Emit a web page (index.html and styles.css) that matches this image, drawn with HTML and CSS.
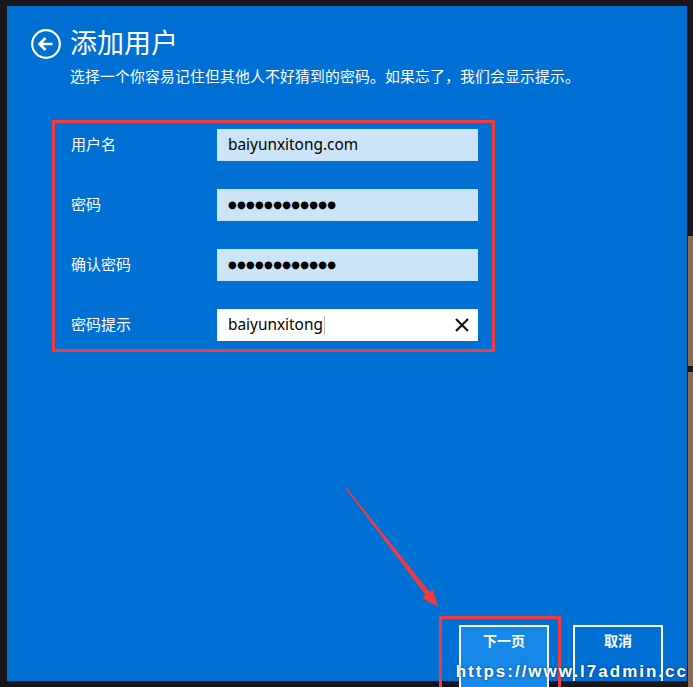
FILE: index.html
```html
<!DOCTYPE html>
<html lang="zh-CN">
<head>
    <meta charset="UTF-8">
    <meta name="viewport" content="width=device-width, initial-scale=1.0">
    <title>添加用户</title>
    <link rel="stylesheet" href="styles.css">
</head>
<body>

<div class="panel">
    <div class="header">
        <svg class="back" width="30" height="30" viewBox="0 0 30 30">
            <circle cx="15" cy="15" r="13.8" fill="none" stroke="#fff" stroke-width="2.2"/>
            <path d="M8.5 15 H21.5 M14.5 9 L8.5 15 L14.5 21" fill="none" stroke="#fff" stroke-width="2.6"/>
        </svg>
        <h1 class="title">添加用户</h1>
    </div>
    <p class="subtitle">选择一个你容易记住但其他人不好猜到的密码。如果忘了，我们会显示提示。</p>

    <div class="form">
        <label class="label">用户名</label>
        <div class="field">baiyunxitong.com</div>

        <label class="label">密码</label>
        <div class="field dots">●●●●●●●●●●●●</div>

        <label class="label">确认密码</label>
        <div class="field dots">●●●●●●●●●●●●</div>

        <label class="label">密码提示</label>
        <div class="field active">
            <span>baiyunxitong</span><span class="caret"></span>
            <svg class="clear" width="14" height="14" viewBox="0 0 14 14">
                <path d="M1 1 L13 13 M13 1 L1 13" stroke="#111" stroke-width="2.2"/>
            </svg>
        </div>
    </div>

    <div class="footer">
        <div class="mark">
            <div class="button next">下一页</div>
        </div>
        <div class="button cancel">取消</div>
    </div>

    <div class="watermark">https://www.l7admin.cc</div>
</div>

<div class="side">
    <div class="strip top"></div>
    <div class="strip"></div>
</div>

<svg class="arrow" width="693" height="687" viewBox="0 0 693 687">
    <polygon points="346.5,487.6 429.6,592.1 433.1,589.3 438,607 422.1,597.9 425.6,595.1 345.5,488.4" fill="#f03a3c"/>
</svg>

</body>
</html>
```

FILE: styles.css
```css
body {
    margin: 0;
    width: 693px;
    height: 687px;
    background-color: #17171b;
    display: flex;
    overflow: hidden;
    position: relative;
    font-family: "Noto Sans", "Noto Sans CJK SC", sans-serif;
}

.panel {
    position: relative;
    margin: 6px 0 0 7px;
    width: 680px;
    height: 675px;
    background-color: #0070d4;
    display: flex;
    flex-direction: column;
    padding: 22px 0 0 24px;
    box-sizing: border-box;
    color: #fff;
}

.header {
    display: flex;
    align-items: center;
    gap: 9px;
    height: 32px;
}

.back {
    display: block;
}

.title {
    margin: 0;
    font-family: "Noto Sans CJK SC", sans-serif;
    font-size: 27px;
    font-weight: 400;
    line-height: 32px;
    margin-top: -4px;
}

.subtitle {
    margin: 6px 0 0 39px;
    font-family: "Noto Sans CJK SC", sans-serif;
    font-size: 14.8px;
    letter-spacing: 0.2px;
    line-height: 20px;
}

.form {
    margin: 34px 0 0 21px;
    width: 443px;
    box-sizing: border-box;
    border: 3px solid #f23b3e;
    padding: 6px 14px 8px 16px;
    display: grid;
    grid-template-columns: 146px 261px;
    grid-auto-rows: 32px;
    row-gap: 28px;
    align-items: center;
}

.label {
    font-family: "Noto Sans CJK SC", sans-serif;
    font-size: 15px;
    line-height: 20px;
    margin-top: -2px;
}

.field {
    height: 32px;
    background-color: #cce4f7;
    color: #000;
    padding-left: 11px;
    font-size: 15.4px;
    line-height: 32px;
    display: flex;
    align-items: center;
}

.field.dots {
    font-family: "DejaVu Sans", sans-serif;
    font-size: 10px;
    letter-spacing: 0.3px;
}

.field.active {
    background-color: #fff;
    position: relative;
}

.caret {
    width: 1px;
    height: 19px;
    margin-left: 1px;
    background-color: #bbb;
}

.clear {
    margin-left: auto;
    margin-right: 9px;
}

.footer {
    margin-top: auto;
    margin-left: 408px;
    height: 65px;
    display: flex;
    gap: 12px;
}

.mark {
    border: 3px solid #f23b3e;
    border-bottom: none;
    padding: 6px 9px 0 17px;
    height: 68px;
}

.button {
    width: 90px;
    box-sizing: border-box;
    border: 2px solid #fff;
    border-bottom: none;
    text-align: center;
    font-family: "Noto Sans CJK SC", sans-serif;
    font-size: 14px;
    font-weight: 700;
    padding-top: 3px;
    line-height: 20px;
}

.next {
    height: 62px;
    background-color: #1689e8;
}

.cancel {
    margin-top: 9px;
    height: 56px;
}

.watermark {
    position: absolute;
    right: -1px;
    bottom: 0;
    font-family: "Liberation Sans", Arial, sans-serif;
    font-size: 17px;
    font-weight: 700;
    letter-spacing: 2px;
    line-height: 18px;
    color: #fff;
    text-shadow: 0 0 3px rgba(0, 40, 90, 0.8);
}

.side {
    width: 6px;
    display: flex;
    flex-direction: column;
    padding-top: 236px;
    gap: 6px;
}

.strip {
    width: 5px;
    margin-left: 1px;
    background-color: #8d6a4f;
    flex: 1;
}

.strip.top {
    flex: none;
    height: 130px;
}

.arrow {
    position: absolute;
    left: 0;
    top: 0;
    pointer-events: none;
}
```
